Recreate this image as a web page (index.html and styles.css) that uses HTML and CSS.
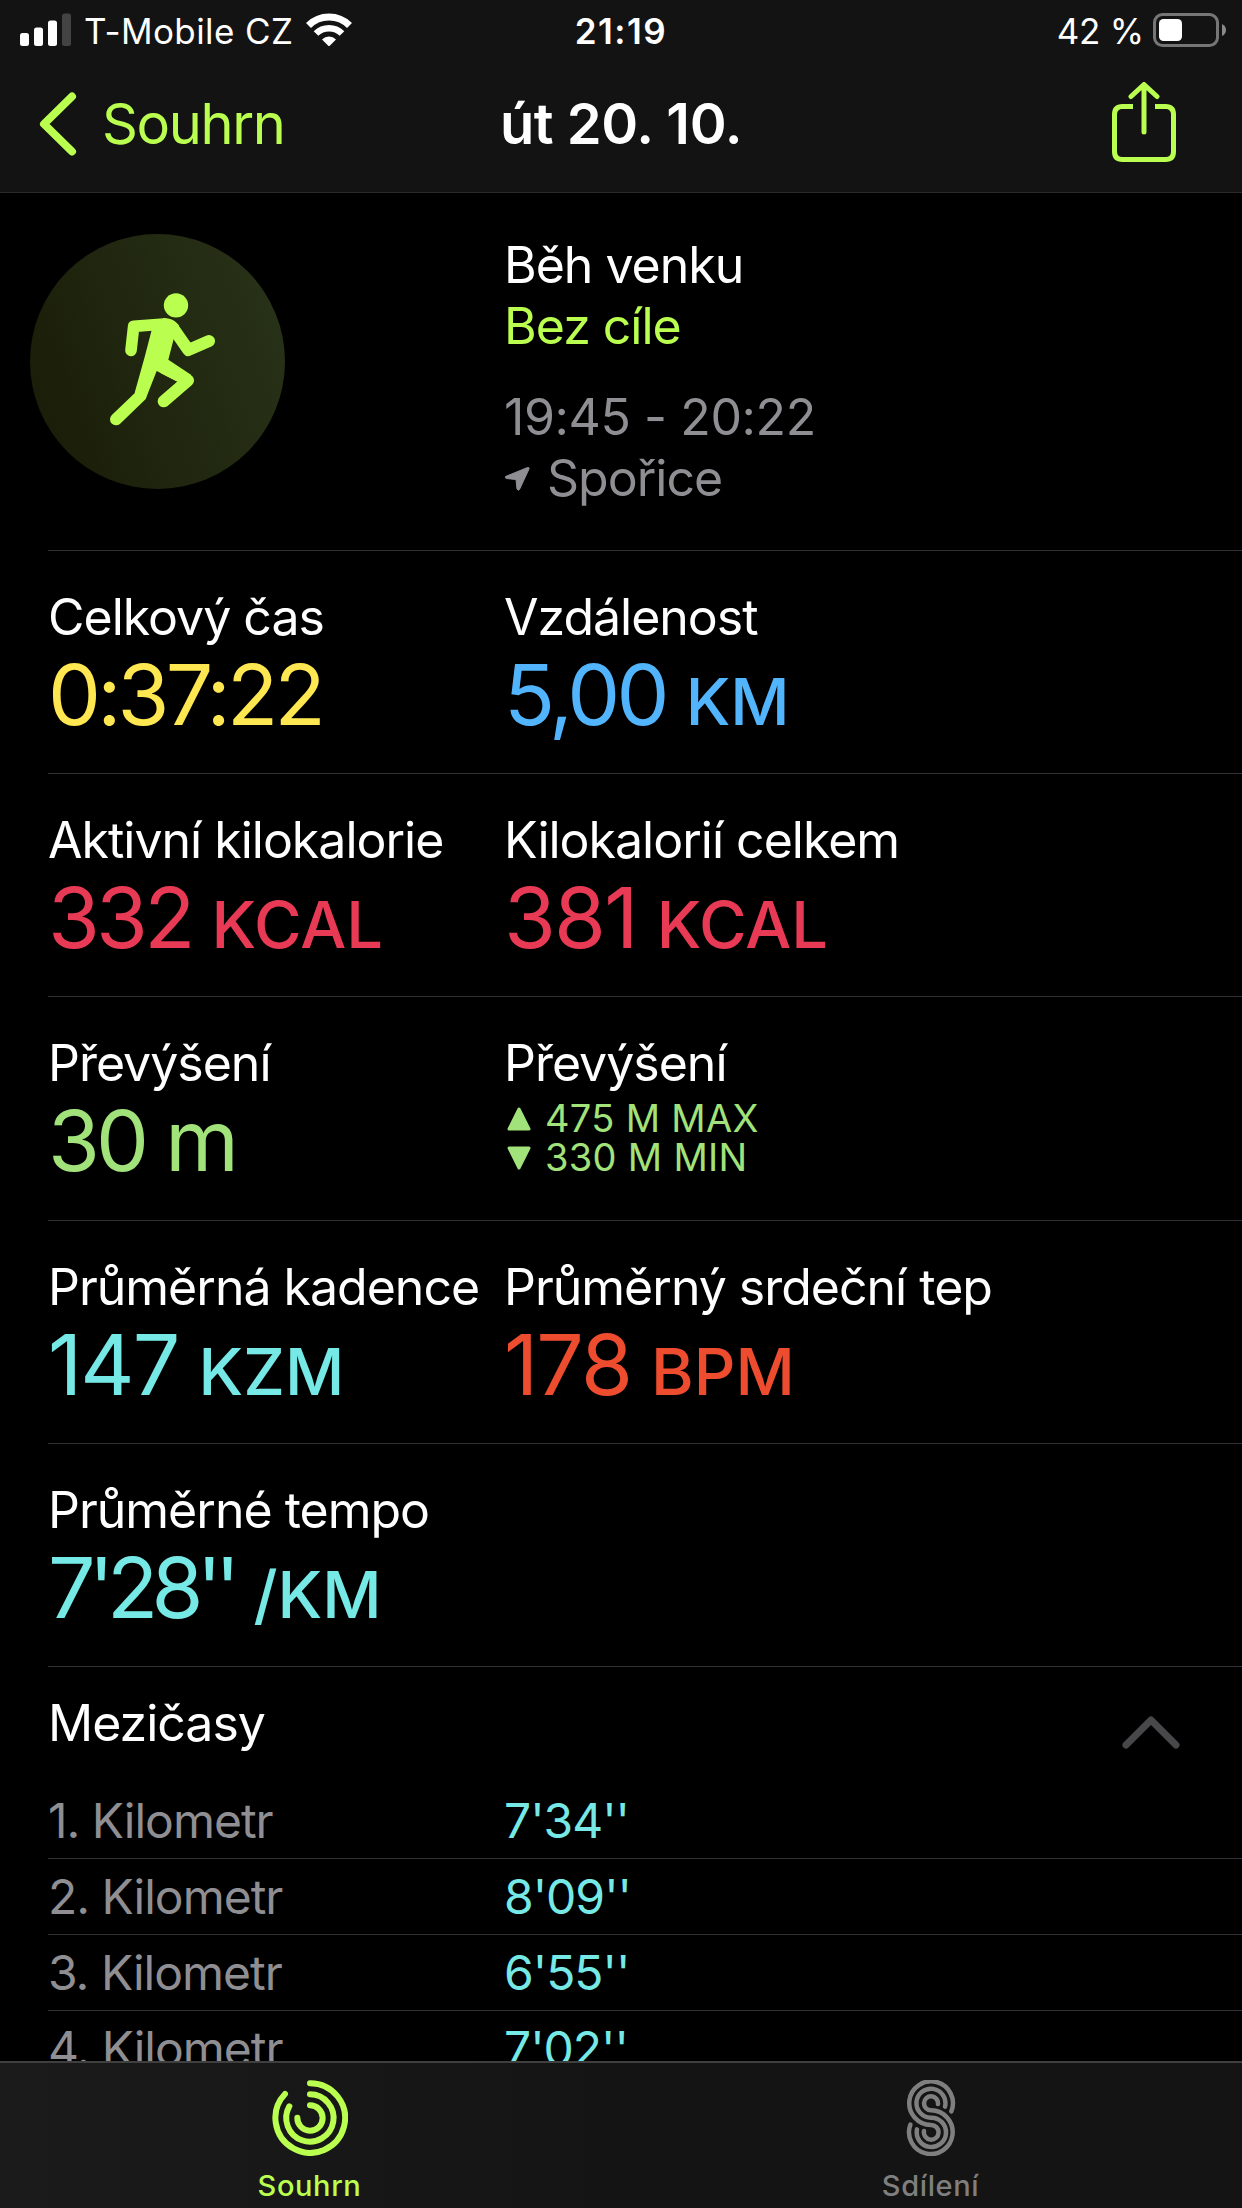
FILE: index.html
```html
<!DOCTYPE html>
<html lang="cs">
<head>
    <meta charset="UTF-8">
    <meta name="viewport" content="width=device-width, initial-scale=1.0">
    <title>Souhrn</title>
    <link rel="stylesheet" href="styles.css">
</head>
<body>
    <div class="top">
        <div class="status">
            <div class="status-left">
                <svg class="signal" viewBox="0 0 52 33" width="52" height="33" fill="#fff">
                    <rect x="0" y="20" width="9" height="13" rx="2.5"/>
                    <rect x="14" y="14.5" width="9" height="18.5" rx="2.5"/>
                    <rect x="28" y="7.5" width="9" height="25.5" rx="2.5"/>
                    <rect x="42" y="0.5" width="9" height="32.5" rx="2.5" fill="#434343"/>
                </svg>
                <span class="carrier">T-Mobile CZ</span>
                <svg class="wifi" viewBox="0 0 46 33" width="46" height="33" fill="none" stroke="#fff">
                    <path d="M2.5 12.5a29 29 0 0 1 41 0" stroke-width="7"/>
                    <path d="M10 20.5a18.5 18.5 0 0 1 26 0" stroke-width="6.5"/>
                    <path d="M16 26.5a9.8 9.8 0 0 1 14 0L23 33.5z" fill="#fff" stroke="none"/>
                </svg>
            </div>
            <div class="clock">21:19</div>
            <div class="status-right">
                <span class="percent">42 %</span>
                <svg class="battery" viewBox="0 0 74 34" width="74" height="34">
                    <rect x="1.5" y="1.5" width="63" height="31" rx="8" fill="none" stroke="#767676" stroke-width="3"/>
                    <rect x="6" y="6" width="23" height="22" rx="4.5" fill="#fff"/>
                    <path d="M69 11q4 2 4 6t-4 6z" fill="#8a8a8a"/>
                </svg>
            </div>
        </div>
        <div class="nav">
            <div class="back">
                <svg viewBox="0 0 38 64" width="38" height="64"><path d="M33 4.5L5 32L33 59.5" fill="none" stroke="#baff4f" stroke-width="8" stroke-linecap="round" stroke-linejoin="round"/></svg>
                <span>Souhrn</span>
            </div>
            <div class="title">út 20. 10.</div>
            <svg class="share" viewBox="0 0 64 80" width="64" height="80" fill="none" stroke="#baff4f" stroke-width="5" stroke-linecap="round" stroke-linejoin="round">
                <path d="M21 24.500h-10.500q-8 0-8 8v37q0 8 8 8h43q8 0 8-8v-37q0-8-8-8H43" stroke-linecap="butt"/>
                <path d="M32 3v47M19 14.500L32 2.500l13 12"/>
            </svg>
        </div>
    </div>

    <div class="content">
        <div class="workout">
            <div class="badge">
                <!-- runner -->
                <svg viewBox="90 101 765 765" width="255" height="255" fill="#baff4f" stroke="#baff4f" stroke-linecap="round" stroke-linejoin="round">
                    <circle cx="528" cy="315" r="36.5" stroke="none"/>
                    <path d="M393 450L401 378L492 371" fill="none" stroke-width="35"/>
                    <path d="M507 375Q516 378 524 390L565 449L627 422" fill="none" stroke-width="36"/>
                    <path d="M491 353Q520 353 537 375L521 416L505 478L470 512L437 596L404 577L434 470L456 385z" stroke="none"/>
                    <path d="M505 478L574 524L531 543L470 512L460 480z" stroke="none"/>
                    <path d="M495 505L564 540L491 603" fill="none" stroke-width="36"/>
                    <path d="M421 587L348 657" fill="none" stroke-width="36"/>
                </svg>
            </div>
            <div class="info">
                <div>Běh venku</div>
                <div class="lime">Bez cíle</div>
                <div class="gray time">19:45 - 20:22</div>
                <div class="gray place">
                    <svg viewBox="0 0 26 26" width="26" height="26"><path d="M23.5 1.5L1.5 10.5Q1 12 2.5 12.5L12 13.5L13 23Q14 25 15.5 23.5L25 3Q25.5 1 23.5 1.5z" fill="#8e8e93" stroke="#8e8e93"/></svg>
                    <span>Spořice</span>
                </div>
            </div>
        </div>

        <div class="row">
            <div class="cell">
                <div class="label">Celkový čas</div>
                <div class="value yellow">0:37:22</div>
            </div>
            <div class="cell">
                <div class="label">Vzdálenost</div>
                <div class="value blue">5,00<span class="unit">KM</span></div>
            </div>
        </div>
        <div class="row">
            <div class="cell">
                <div class="label">Aktivní kilokalorie</div>
                <div class="value red">332<span class="unit">KCAL</span></div>
            </div>
            <div class="cell">
                <div class="label">Kilokalorií celkem</div>
                <div class="value red loose">381<span class="unit">KCAL</span></div>
            </div>
        </div>
        <div class="row">
            <div class="cell">
                <div class="label">Převýšení</div>
                <div class="value green">30<span class="meters">m</span></div>
            </div>
            <div class="cell">
                <div class="label">Převýšení</div>
                <div class="range green">
                    <div><svg viewBox="0 0 24 24" width="24" height="24"><path d="M12 2L22 22H2z" fill="#a1e37a" stroke="#a1e37a" stroke-width="3" stroke-linejoin="round"/></svg><span>475 M MAX</span></div>
                    <div><svg viewBox="0 0 24 24" width="24" height="24"><path d="M12 22L22 2H2z" fill="#a1e37a" stroke="#a1e37a" stroke-width="3" stroke-linejoin="round"/></svg><span>330 M MIN</span></div>
                </div>
            </div>
        </div>
        <div class="row">
            <div class="cell">
                <div class="label">Průměrná kadence</div>
                <div class="value cyan loose">147<span class="unit">KZM</span></div>
            </div>
            <div class="cell">
                <div class="label">Průměrný srdeční tep</div>
                <div class="value orange loose">178<span class="unit">BPM</span></div>
            </div>
        </div>
        <div class="row">
            <div class="cell">
                <div class="label">Průměrné tempo</div>
                <div class="value cyan tight">7'28''<span class="unit">/KM</span></div>
            </div>
        </div>

        <div class="splits-head">
            <div class="label">Mezičasy</div>
            <svg viewBox="0 0 58 34" width="58" height="34"><path d="M4 30L29 5L54 30" fill="none" stroke="#48484a" stroke-width="7" stroke-linecap="round" stroke-linejoin="round"/></svg>
        </div>
        <div class="split"><span class="gray">1. Kilometr</span><span class="cyan">7'34''</span></div>
        <div class="split"><span class="gray">2. Kilometr</span><span class="cyan">8'09''</span></div>
        <div class="split"><span class="gray">3. Kilometr</span><span class="cyan">6'55''</span></div>
        <div class="split"><span class="gray">4. Kilometr</span><span class="cyan">7'02''</span></div>
    </div>

    <div class="tabs">
        <div class="tab active">
            <svg viewBox="156 90 228 228" width="76" height="76" fill="none" stroke="#baff4f" stroke-width="18" stroke-linecap="round">
                <path d="M270 99.500A104.500 104.500 0 1 1 195 132"/>
                <path d="M270 133A71 71 0 1 1 208 169"/>
                <path d="M270 166A38 38 0 1 1 232 203"/>
            </svg>
            <span>Souhrn</span>
        </div>
        <div class="tab">
            <svg viewBox="129 90 228 228" width="76" height="76" fill="none" stroke="#7f7f7f" stroke-width="13.5" stroke-linecap="round">
                <path d="M304 184A65.500 65.500 0 1 0 243 225A22 22 0 1 1 222 243"/>
                <path d="M285 170A43.500 43.500 0 1 0 243 203A44 44 0 1 1 201 238"/>
                <path d="M264 162A21 21 0 1 0 243 181A65.500 65.500 0 1 1 181 224"/>
            </svg>
            <span>Sdílení</span>
        </div>
    </div>
</body>
</html>
```
FILE: styles.css
```css
* {
    box-sizing: border-box;
}
body {
    margin: 0;
    height: 2208px;
    background-color: #000;
    color: #fff;
    font-family: Inter, "Liberation Sans", sans-serif;
    display: flex;
    flex-direction: column;
    overflow: hidden;
}
svg {
    display: block;
    flex: none;
}
.top {
    height: 193px;
    flex: none;
    background-color: #131313;
    border-bottom: 1px solid #2b2b2b;
}
.status {
    display: grid;
    grid-template-columns: 1fr auto 1fr;
    height: 62px;
    line-height: 62px;
    font-size: 35px;
}
.status-left, .status-right {
    display: flex;
}
.status-left {
    padding-left: 20px;
}
.status-right {
    justify-content: flex-end;
    padding-right: 15px;
}
.signal, .wifi, .battery {
    margin-top: 13px;
}
.carrier {
    margin-left: 12px;
    letter-spacing: 0.4px;
}
.wifi {
    margin-left: 13px;
}
.clock {
    font-weight: 600;
    letter-spacing: 1.5px;
}
.percent {
    letter-spacing: -0.2px;
}
.battery {
    margin-left: 9px;
}
.nav {
    display: grid;
    grid-template-columns: 1fr auto 1fr;
    align-items: center;
    height: 124px;
    padding: 0 39px;
    font-size: 56px;
}
.back {
    display: flex;
    align-items: center;
    gap: 25px;
    color: #baff4f;
    letter-spacing: -1.4px;
}
.title {
    font-weight: 600;
    letter-spacing: -0.4px;
}
.share {
    justify-self: end;
    margin: 0 27px 5px 0;
}
.content {
    flex: 1;
    min-height: 0;
    overflow: hidden;
    padding-left: 48px;
    font-size: 50px;
    letter-spacing: -1px;
}
.workout, .row {
    display: grid;
    grid-template-columns: 456px 1fr;
    border-bottom: 1px solid #313133;
}
.workout {
    height: 358px;
    padding-top: 41px;
    line-height: 61px;
}
.badge {
    width: 255px;
    height: 255px;
    margin-left: -18px;
    border-radius: 50%;
    background: linear-gradient(70deg, #191b06, #29341a);
}
.info {
    padding-top: 1px;
}
.time {
    margin-top: 30px;
    letter-spacing: -0.4px;
}
.place {
    display: flex;
    align-items: center;
    gap: 17px;
}
.row {
    height: 223.2px;
    padding-top: 36px;
}
.label {
    line-height: 60px;
    white-space: nowrap;
}
.value {
    margin-top: 3px;
    font-size: 84px;
    line-height: 90px;
    letter-spacing: -3.8px;
    white-space: nowrap;
}
.loose {
    letter-spacing: -1.8px;
}
.tight {
    letter-spacing: -6.8px;
}
.unit {
    margin-left: 20px;
    font-size: 65px;
    font-weight: 500;
    letter-spacing: 0;
}
.meters {
    margin-left: 20px;
}
.range {
    font-size: 38px;
    line-height: 39px;
    padding-top: 6px;
    letter-spacing: 0.3px;
}
.range div {
    display: flex;
    align-items: center;
    gap: 14px;
    padding-left: 3px;
}
.splits-head {
    display: flex;
    justify-content: space-between;
    height: 116px;
    padding: 26px 62px 0 0;
}
.splits-head svg {
    margin-top: 22px;
}
.split {
    display: grid;
    grid-template-columns: 456px 1fr;
    height: 76px;
    line-height: 76px;
    font-size: 48px;
    border-bottom: 1px solid #313133;
}
.tabs {
    display: grid;
    grid-template-columns: 1fr 1fr;
    flex: none;
    height: 147px;
    background: linear-gradient(90deg, #1b1b1b, #141414 50%);
    border-top: 2px solid #3f3f40;
}
.tab {
    display: flex;
    flex-direction: column;
    align-items: center;
    padding: 17px 2px 0 0;
    font-size: 29px;
    font-weight: 500;
    letter-spacing: 0.6px;
    color: #7f7f7f;
}
.tab span {
    line-height: 36px;
    margin-top: 12px;
}
.active, .lime {
    color: #baff4f;
}
.gray {
    color: #8e8e93;
}
.yellow {
    color: #ffe752;
}
.blue {
    color: #52b4fc;
}
.red {
    color: #e83955;
}
.green {
    color: #a1e37a;
}
.cyan {
    color: #76e8e5;
}
.orange {
    color: #ed4c2f;
}
```
